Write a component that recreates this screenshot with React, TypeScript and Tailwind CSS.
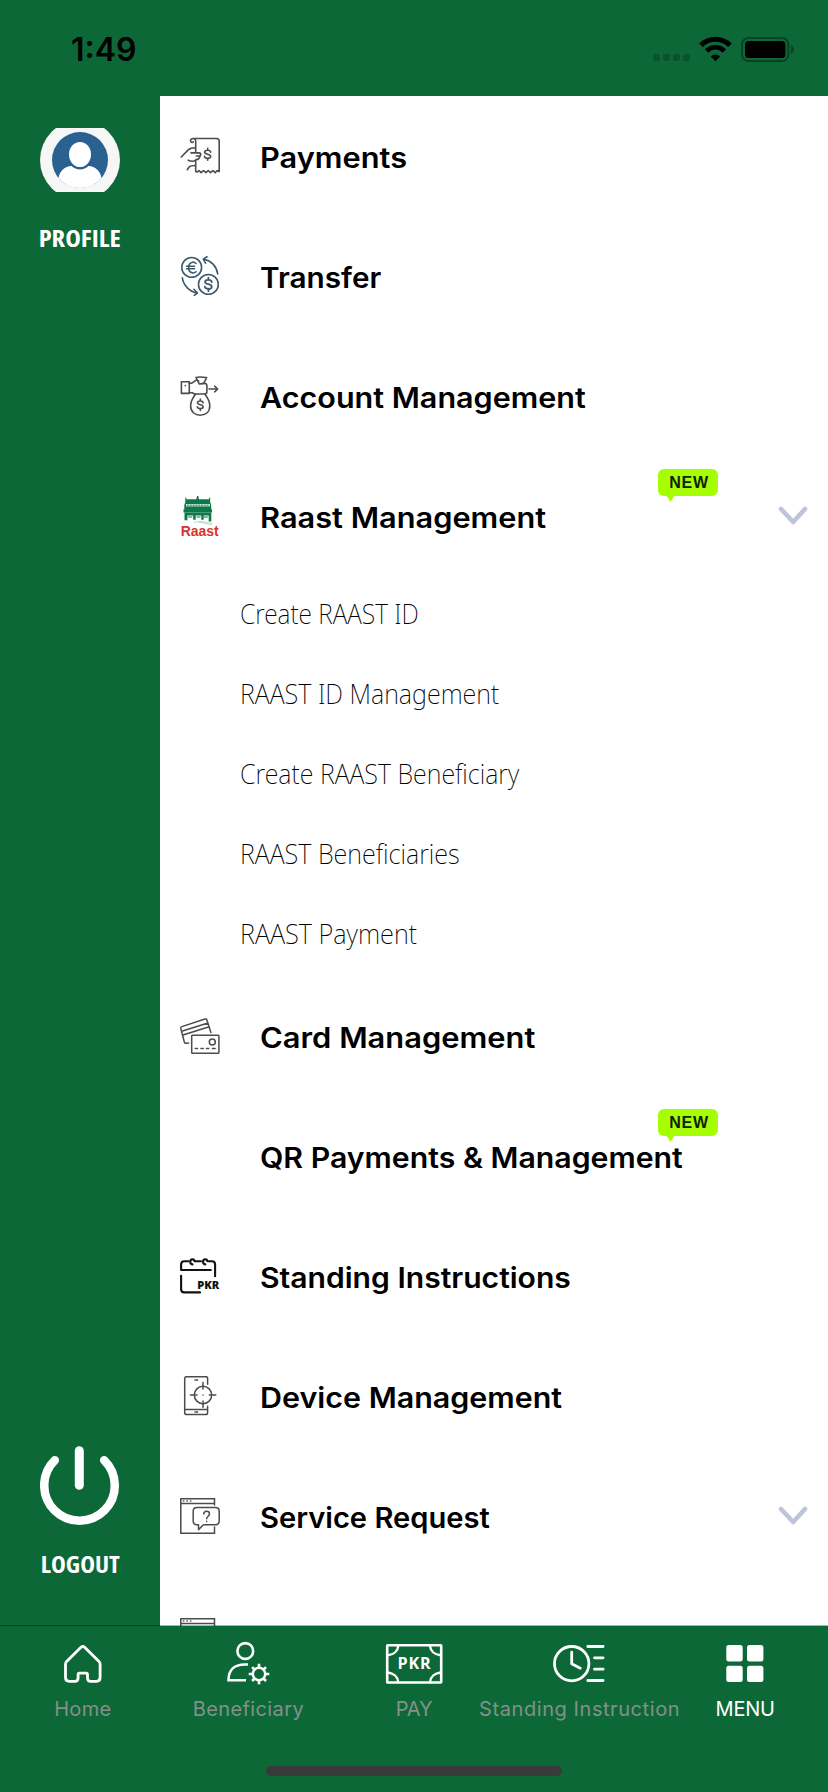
import type { ReactNode } from "react";

/* ---------- status bar ---------- */

function StatusBar() {
  return (
    <header className="flex h-24 shrink-0 items-start justify-between pr-[33px] pl-[71px]">
      <span className="mt-[30px] text-[32px] leading-10 font-semibold text-black">1:49</span>
      <div className="mt-9 flex items-start">
        <div className="mt-[18px] mr-[9px] flex gap-[3px]">
          <span className="size-[7px] rounded-xs bg-[#0b522d]" />
          <span className="size-[7px] rounded-xs bg-[#0b522d]" />
          <span className="size-[7px] rounded-xs bg-[#0b522d]" />
          <span className="size-[7px] rounded-xs bg-[#0b522d]" />
        </div>
        <svg className="mr-[9px]" width="33" height="27" viewBox="0 0 33 27" fill="none">
          <path d="M2 9.200a20.500 20.500 0 0 1 29 0" stroke="#000" strokeWidth="5" />
          <path d="M7.600 15a12.600 12.600 0 0 1 17.800 0" stroke="#000" strokeWidth="4.600" />
          <path d="M16.500 25.200 11.800 20.400a6.800 6.800 0 0 1 9.400 0z" fill="#000" />
        </svg>
        <svg width="54" height="27" viewBox="0 0 54 27" fill="none">
          <rect x="1" y="2" width="46.400" height="23" rx="6.500" stroke="#0a4224" strokeWidth="2" />
          <rect x="4" y="5" width="40.400" height="17" rx="3.500" fill="#000" />
          <path d="M50 9.500c2 .6 3 2 3 4s-1 3.400-3 4z" fill="#0a4224" />
        </svg>
      </div>
    </header>
  );
}

/* ---------- side rail ---------- */

function Avatar() {
  return (
    <svg width="80" height="64" viewBox="0 0 80 64">
      <circle cx="40" cy="32" r="40" fill="#f6f6f7" />
      <circle cx="40" cy="32" r="28" fill="#2a6191" />
      <path d="M18.500 50c1-7 6.500-12 13-12 4.500 4.500 12.500 4.500 17 0 6.500 0 12 5 13 12a28 28 0 0 1-43 0z" fill="#fff" />
      <ellipse cx="40" cy="26.500" rx="11" ry="12.600" fill="#fff" />
    </svg>
  );
}

function SideRail() {
  return (
    <aside className="flex w-40 shrink-0 flex-col items-center justify-between pt-8 pb-[46px] text-white">
      <div className="flex flex-col items-center">
        <Avatar />
        <span className="mt-[30px] scale-x-[1.15] font-['Open_Sans'] text-[23px] leading-8 font-bold font-stretch-75%">
          PROFILE
        </span>
      </div>
      <div className="flex flex-col items-center">
        <svg width="80" height="80" viewBox="0 0 80 80" fill="none" stroke="#fff" strokeLinecap="round">
          <path d="M14.800 14.200a35.300 35.300 0 1 0 49.400 0" strokeWidth="8.500" />
          <path d="M39.300 4.800v34.400" strokeWidth="9" />
        </svg>
        <span className="mt-[22px] scale-x-[1.09] font-['Open_Sans'] text-[23px] leading-8 font-bold font-stretch-75%">
          LOGOUT
        </span>
      </div>
    </aside>
  );
}

/* ---------- menu icons ---------- */

function Glyph({ color = "#4c4c4c", width = 1.6, children }: { color?: string; width?: number; children: ReactNode }) {
  return (
    <svg
      width="40"
      height="40"
      viewBox="0 0 40 40"
      fill="none"
      stroke={color}
      strokeWidth={width}
      strokeLinecap="round"
      strokeLinejoin="round"
    >
      {children}
    </svg>
  );
}

function DollarSign({ x, y, h = 12 }: { x: number; y: number; h?: number }) {
  return (
    <svg x={x - h / 2} y={y - h / 2} width={h} height={h} viewBox="0 0 12 12" overflow="visible">
      <path d="M9 3.900C8.800 2.600 7.600 2 6 2S3 2.700 3 3.900C3 6.500 9 5.200 9 8c0 1.300-1.300 2-3 2S3 9.300 2.800 8M6 0v2M6 10v2" />
    </svg>
  );
}

function PaymentsIcon() {
  return (
    <Glyph>
      <path d="M15.700 16V5.500c0-4-5.200-3.700-5.200-.7 0 1.700 2 2 2.800 1M12.500 2.500h24c1.800 0 2.700 1 2.700 2.700v30.300l-2-1-2 2.200-2.300-2.200-2.400 2.200-2.300-2.200-2.300 2.200-2.400-2.200-2.300 2.200-2.300-2.200-1.500 1.500-1.700-.500V24.500" />
      <path d="M1.200 21 8.500 13.600c1.500-1.500 3-1.900 6.800-1.900M11 16.900h8c2.300 0 2.200 2 .8 3.100h-3.500M20 20c-.5 2.800-1.900 3.500-3.700 3.500-1.500 2.200-5.300 2.200-8 .7M7.300 33.700l1.800-2.700c1.300-1.400 2.800-1.500 6-1.500" />
      <DollarSign x={27.700} y={18.300} h={12} />
    </Glyph>
  );
}

function TransferIcon() {
  return (
    <Glyph color="#3d5a6d">
      <circle cx="11.700" cy="11.400" r="9.900" />
      <circle cx="28.400" cy="28.400" r="9.900" />
      <path d="M27 .8l-3.800 2.400 2.400 3.900M24 3.200c7 1.300 12.600 7 13.700 14.800M14 33.300l3.500 3.700-3.300 2.300M2.300 21.700c1 7.500 7 14 14.700 15.300" />
      <path d="M16 7.500c-1.200-1.200-2.300-1.500-3.500-1.300-5.200.9-5.200 9.900 0 10.700 1.300.2 2.500-.2 3.500-1.200M6.500 10.300h8M6.500 12.800h8" />
      <DollarSign x={28.400} y={28.400} h={13.500} />
    </Glyph>
  );
}

function AccountIcon() {
  return (
    <Glyph>
      <path d="M1.400 5.700h7.900v11.700H1.400zM5.300 9.600v.2" />
      <path d="M9.300 7.300h2.200l5-3.500 2.200 1.300M9.300 16.700h3l2 1.300h10.400c1.400 0 2.200-.8 2.200-2.200V9.600c0-1.400-.8-2-2-2.200h-2.600M16 1.500c3.500-1.300 6.700-.2 10.600.1l-2.900 6-4.500.3-3.200-6.400" />
      <path d="M15.500 18.200c-3.200 4.200-4.900 7.800-4.900 11.600 0 6 4.200 9.400 9.700 9.400s9.500-3.400 9.500-9.400c0-3.800-1.600-7.400-4.800-11.600" />
      <path d="M29 13h8.500M34.700 10.200l3 2.800-3 2.800" />
      <DollarSign x={20.300} y={28.800} h={11.500} />
    </Glyph>
  );
}

function RaastIcon() {
  return (
    <svg width="40" height="40" viewBox="0 0 40 40" overflow="visible">
      <path d="M17 0h1.300l.7 3.200h10.200V1.500h1V6l1 3v4.200h.8v3.300H3.500v-3.300h.8V9l1-3V1.500h1v1.700h10z" fill="#0b7a48" />
      <path d="M6 8h24v2.400H6z" fill="#d5e6dd" />
      <path d="M7 9.200h22" stroke="#0b7a48" strokeWidth=".9" strokeDasharray="2 .8" />
      <path d="M4.500 16.500h26.800v9h-2.600v-6h-5v4.300h-2.400v-4.300h-5.600v4.300h-2.500v-4.300H7.400v4.800H4.500z" fill="#0b7a48" />
      <path d="M8 21h4.500M16.500 21h4M24 21h4" stroke="#0b7a48" strokeWidth="1" />
      <path d="M14 26.300c6-1.500 10 1.700 18 2.200M19 25.600c6-.6 8 2.200 13.500 1.600" stroke="#8dbfa5" strokeWidth=".6" fill="none" />
      <text x=".7" y="39.500" fontSize="14" fontWeight="700" textLength="38" lengthAdjust="spacingAndGlyphs" fill="#d9322f" className="font-['Liberation_Sans']">Raast</text>
    </svg>
  );
}

function CardIcon() {
  return (
    <Glyph width={1.5}>
      <rect x="11.700" y="19.300" width="27.200" height="18" rx=".8" />
      <circle cx="32.300" cy="25.900" r="3" />
      <path d="M15.300 32.500h2.200M21 32.500h2.200M26.500 32.500h2.200M32.500 32.500h2.600" />
      <path d="M8.700 27l-2.600.3c-1 .1-1.500-.3-1.800-1.300L.8 12.400c-.2-1 0-1.500 1-1.800L25 3c1-.3 1.600 0 1.900 1l4 12.500M1.700 15.200 28 7M3 19l26.200-8.300" />
    </Glyph>
  );
}

function StandingIcon() {
  return (
    <Glyph color="#111" width={2.1}>
      <path d="M8.500 5.300H4.300C2.200 5.300 1.100 6.500 1.100 8.600V14h29.700M15 5.300h6M28.500 5.300h3.300c2.100 0 3.300 1.200 3.300 3.300v11.600M1.100 19.800v13.400c0 2.100 1.100 3.200 3.200 3.200H20" />
      <path d="M12.500 8.400c-3-.6-3-5 0-5.200 1.400 0 2 1 2 2M25.300 8.400c-3-.6-3-5 0-5.200 1.400 0 2 1 2 2" />
      <text x="17.300" y="33" fontSize="11" fontWeight="800" textLength="22" lengthAdjust="spacingAndGlyphs" fill="#111" stroke="none" className="font-['Open_Sans']">PKR</text>
    </Glyph>
  );
}

function DeviceIcon() {
  return (
    <Glyph width={1.5}>
      <path d="M27.600 8.300V2.500C27.600 1.300 27 .7 25.800 .7H6.500C5.300.7 4.700 1.300 4.700 2.500v34.200c0 1.200.6 1.800 1.800 1.800h19.300c1.200 0 1.800-.6 1.800-1.800v-6.400M4.700 33.500h22.900M15 4h2.600M15 36h2.600" />
      <circle cx="23" cy="19" r="8.700" />
      <path d="M10.500 19h6.500M29.300 19h6.500M23 6.500V13M23 25v6.300M23 18.900v.2" />
    </Glyph>
  );
}

function WindowIcon() {
  return (
    <Glyph width={1.5}>
      <path d="M.8 2.700h33.700v34.500H.8zM.8 7.500h33.700M3.500 5h.3M7 5h.3M10.500 5h.3" strokeLinejoin="miter" />
    </Glyph>
  );
}

function ServiceIcon() {
  return (
    <Glyph width={1.5}>
      <path d="M34.500 9V2.700H.8v34.500h33.700V31M.8 7.500h33.700M3.500 5h.3M7 5h.3M10.500 5h.3" strokeLinejoin="miter" />
      <path d="M17 11.400h18.500c2.500 0 3.700 1.200 3.700 3.700v10c0 2.400-1.200 3.700-3.700 3.700H23.500l-5 4.800v-4.800H17c-2.500 0-3.800-1.300-3.800-3.700v-10c0-2.500 1.300-3.700 3.800-3.700z" fill="#fff" />
      <path d="M23.800 18c0-3.800 5.700-3.600 5.700-.2 0 2.300-2.800 2.500-2.800 5M26.700 25.300v.2" />
    </Glyph>
  );
}

/* ---------- menu list ---------- */

function NewBadge() {
  return (
    <span className="absolute top-[13px] left-[498px] flex h-[27px] w-[60px] items-center justify-center rounded-md bg-[#a6ff00] pl-0.5 font-['Liberation_Sans'] text-base font-bold tracking-[0.8px] text-[#10210a]">
      NEW
      <svg className="absolute top-[26px] left-2" width="9" height="7" viewBox="0 0 9 7">
        <path d="M0 0h9L4.500 7z" fill="#a6ff00" />
      </svg>
    </span>
  );
}

function Chevron() {
  return (
    <svg className="mt-px ml-auto" width="32" height="22" viewBox="0 0 32 22" fill="none">
      <path d="M4 3l12.200 13L28 3" stroke="#bcc5dc" strokeWidth="4.600" strokeLinecap="round" strokeLinejoin="round" />
    </svg>
  );
}

type Item = { label: string; fit: string; icon?: ReactNode; badge?: boolean; chevron?: boolean; children?: string[][] };

const items: Item[] = [
  { label: "Payments", fit: "scale-x-[1.099]", icon: <PaymentsIcon /> },
  { label: "Transfer", fit: "scale-x-[1.062]", icon: <TransferIcon /> },
  { label: "Account Management", fit: "scale-x-[1.09]", icon: <AccountIcon /> },
  {
    label: "Raast Management",
    fit: "scale-x-[1.098]",
    icon: <RaastIcon />,
    badge: true,
    chevron: true,
    children: [
      ["Create RAAST ID", "scale-x-[0.912]"],
      ["RAAST ID Management", "scale-x-[0.935]"],
      ["Create RAAST Beneficiary", "scale-x-[0.931]"],
      ["RAAST Beneficiaries", "scale-x-[0.935]"],
      ["RAAST Payment", "scale-x-[0.943]"],
    ],
  },
  { label: "Card Management", fit: "scale-x-[1.103]", icon: <CardIcon /> },
  { label: "QR Payments & Management", fit: "scale-x-[1.08]", badge: true },
  { label: "Standing Instructions", fit: "scale-x-[1.074]", icon: <StandingIcon /> },
  { label: "Device Management", fit: "scale-x-[1.087]", icon: <DeviceIcon /> },
  { label: "Service Request", fit: "scale-x-[1.04]", icon: <ServiceIcon />, chevron: true },
];

function MenuItem({ item }: { item: Item }) {
  return (
    <li>
      <div className="relative flex h-[120px] items-center pr-[19px] pl-5">
        <span className="size-10 shrink-0">{item.icon}</span>
        <span className={`mt-[3px] ml-10 origin-left text-[28px] leading-10 font-semibold whitespace-nowrap text-black ${item.fit}`}>
          {item.label}
        </span>
        {item.chevron && <Chevron />}
        {item.badge && <NewBadge />}
      </div>
      {item.children && (
        <ul>
          {item.children.map(([label, fit]) => (
            <li key={label} className="flex h-20 items-center pb-1 pl-20">
              <span className={`origin-left font-['Noto_Sans'] text-[27px] leading-10 font-extralight whitespace-nowrap text-black ${fit}`}>
                {label}
              </span>
            </li>
          ))}
        </ul>
      )}
    </li>
  );
}

/* ---------- bottom navigation ---------- */

function HomeIcon() {
  return (
    <svg width="40" height="48" viewBox="0 0 40 48" fill="none" stroke="#fff" strokeWidth="2.800" strokeLinejoin="round">
      <path d="M18 7.300 3.600 21.500c-.8.800-1.100 1.500-1.100 2.600v13.400c0 2.700 1.100 3.800 3.800 3.800h5.500c2.300 0 3.300-1 3.300-3.300v-3.600c0-.9.400-1.300 1.300-1.300h6.800c.9 0 1.300.4 1.300 1.300V38c0 2.300 1 3.300 3.300 3.300h5.500c2.700 0 3.800-1.100 3.800-3.800V24.100c0-1.100-.3-1.800-1.100-2.600L21.600 7.300c-1.300-1.300-2.300-1.300-3.600 0z" />
    </svg>
  );
}

function BeneficiaryIcon() {
  return (
    <svg width="48" height="48" viewBox="0 0 48 48" fill="none" stroke="#fff" strokeWidth="2.600">
      <circle cx="21.300" cy="11" r="7.900" />
      <path d="M24 24.500h-3.500C10 24.500 4.500 30.500 4.500 40.200H22" />
      <circle cx="35" cy="34" r="6.200" strokeWidth="2.500" />
      <path d="M35 28v-4.300M35 44.300V40M29 34h-4.300M45.300 34H41M30.700 29.700l-2.600-2.600M42 41l-2.700-2.700M30.700 38.300 28.100 41M42 27.100l-2.700 2.600" />
    </svg>
  );
}

function PayIcon() {
  return (
    <svg width="60" height="48" viewBox="0 0 60 48" fill="none" stroke="#fff" strokeWidth="2.600">
      <rect x="3.200" y="5.300" width="54" height="37.200" rx=".5" />
      <path d="M14.300 5.800c-.5 5-4.500 8.800-10.500 9.500M46 5.800c.5 5 4.500 8.800 10.500 9.500M14.300 42c-.5-5-4.500-8.800-10.500-9.500M46 42c.5-5 4.500-8.800 10.500-9.500" strokeWidth="2.400" />
      <text x="13.500" y="29.300" fontSize="15.500" fontWeight="700" textLength="34" lengthAdjust="spacingAndGlyphs" letterSpacing=".8" fill="#fff" stroke="none" className="font-['Open_Sans']">PKR</text>
    </svg>
  );
}

function ClockListIcon() {
  return (
    <svg width="60" height="48" viewBox="0 0 60 48" fill="none" stroke="#fff" strokeWidth="2.800" strokeLinecap="round">
      <circle cx="21.700" cy="23.700" r="17.200" />
      <path d="M21.700 12.200v11.600l8.600 4.400M37.800 6.500h15.300M44.500 17.800h8.600M44.500 29.200h8.600M37.800 40.500h15.300" strokeLinejoin="round" />
    </svg>
  );
}

function GridIcon() {
  return (
    <svg width="38" height="48" viewBox="0 0 38 48" fill="#fff">
      <rect x=".3" y="5" width="16.400" height="16.400" rx="2.500" />
      <rect x="21" y="5" width="16.400" height="16.400" rx="2.500" />
      <rect x=".3" y="25.700" width="16.400" height="16.400" rx="2.500" />
      <rect x="21" y="25.700" width="16.400" height="16.400" rx="2.500" />
    </svg>
  );
}

const tabs = [
  { label: "Home", icon: <HomeIcon />, tone: "text-[#84908a] tracking-[0.3px]" },
  { label: "Beneficiary", icon: <BeneficiaryIcon />, tone: "text-[#84908a] tracking-[0.4px]" },
  { label: "PAY", icon: <PayIcon />, tone: "text-[#84908a] tracking-[-0.2px]" },
  { label: "Standing Instruction", icon: <ClockListIcon />, tone: "text-[#84908a] tracking-[0.57px]" },
  { label: "MENU", icon: <GridIcon />, tone: "text-white tracking-[-0.2px]" },
];

function BottomNav() {
  return (
    <nav className="flex h-[166px] shrink-0 flex-col items-center justify-between pt-3.5 pb-4">
      <ul className="grid w-full grid-cols-5">
        {tabs.map((tab) => (
          <li key={tab.label} className="flex flex-col items-center">
            {tab.icon}
            <span className={`mt-[7px] text-[20px] leading-7 whitespace-nowrap ${tab.tone}`}>{tab.label}</span>
          </li>
        ))}
      </ul>
      <span className="h-2.5 w-[296px] rounded-full bg-[#3a3a3a]" />
    </nav>
  );
}

export default function App() {
  return (
    <div className="flex h-[1792px] w-[828px] flex-col overflow-hidden bg-[#0d6838] font-['Inter',sans-serif]">
      <StatusBar />
      <div className="relative flex h-[1530px] shrink-0">
        <SideRail />
        <main className="min-w-0 flex-1 overflow-hidden bg-white">
          <ul>
            {items.map((item) => (
              <MenuItem key={item.label} item={item} />
            ))}
            <li className="flex h-[120px] items-center pl-5">
              <WindowIcon />
            </li>
          </ul>
        </main>
        <div className="absolute inset-x-0 bottom-0 h-px bg-black/30" />
      </div>
      <BottomNav />
    </div>
  );
}
